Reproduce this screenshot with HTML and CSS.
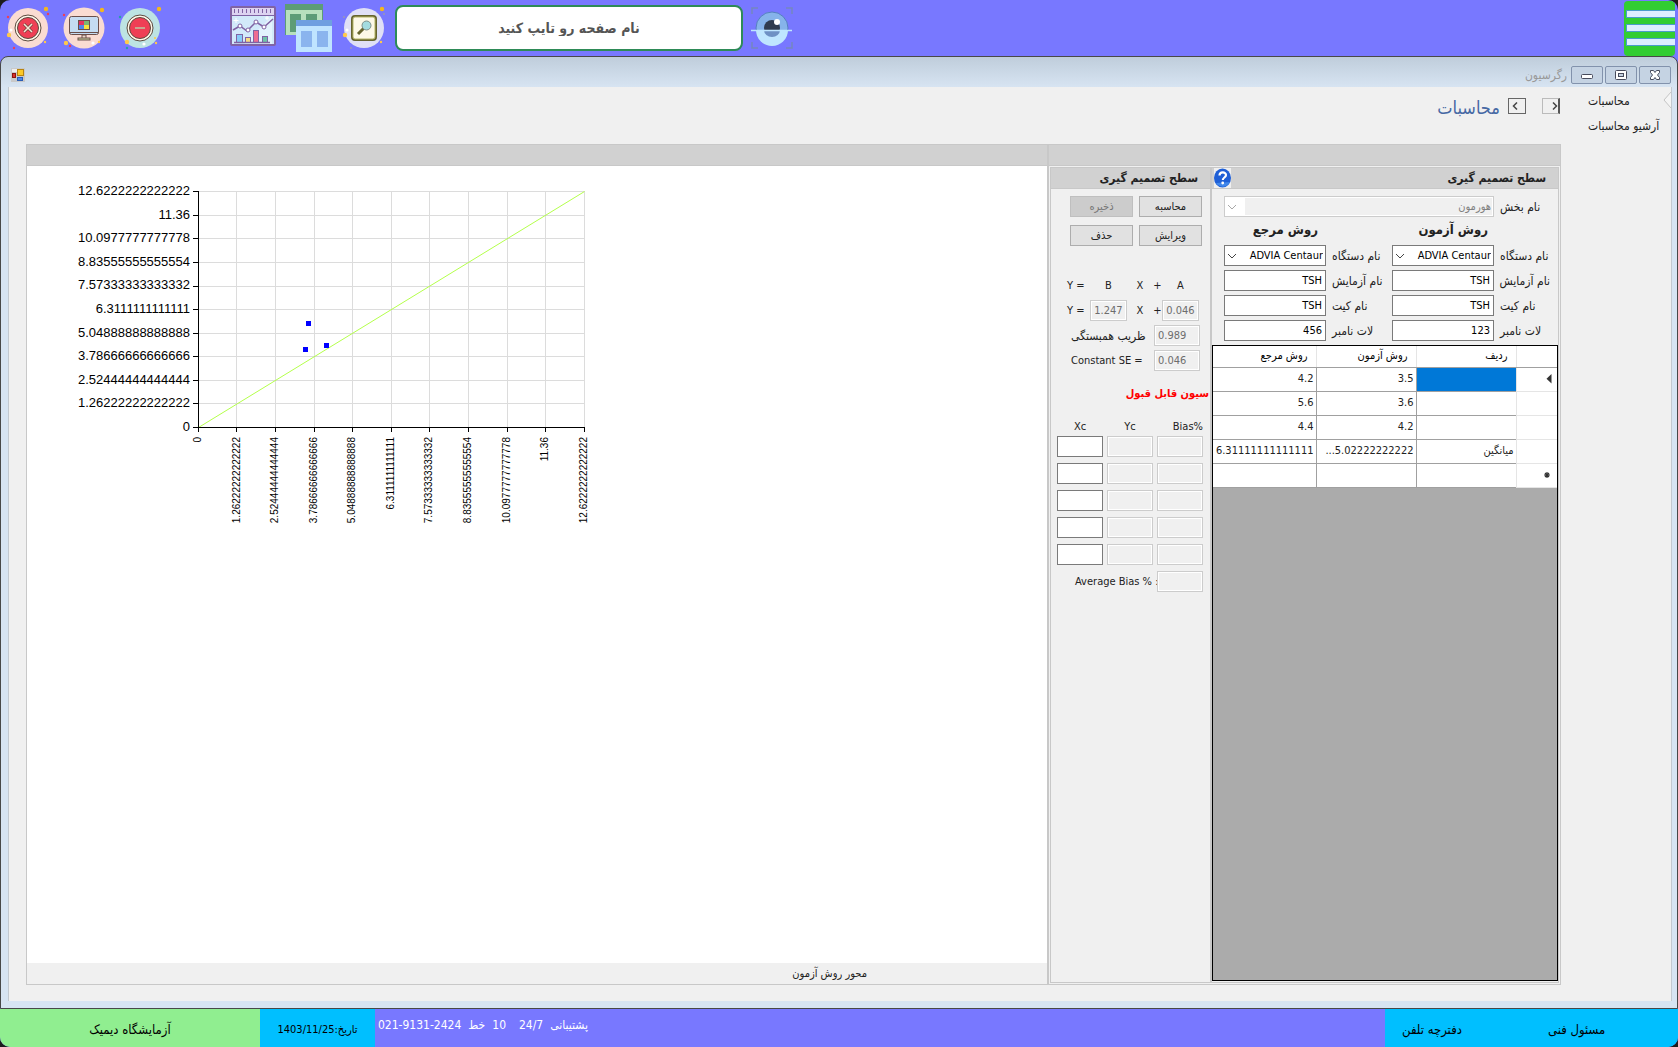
FILE: index.html
```html
<!DOCTYPE html>
<html lang="fa">
<head>
<meta charset="utf-8">
<title>رگرسیون</title>
<link rel="stylesheet" href="styles.css">
</head>
<body>
<div class="app">
  <header class="topbar">
    <nav class="tools">
      <button class="tool" type="button" aria-label="خروج">
        <svg width="44" height="44" viewBox="0 0 44 44">
          <circle cx="22" cy="22" r="20" fill="#fadcd2"/>
          <circle cx="22" cy="22" r="13" fill="#fff8ea" stroke="#5c4a3e"/>
          <circle cx="22" cy="22" r="10.5" fill="#ef3f55" stroke="#5c4a3e"/>
          <path d="M18 18l8 8M26 18l-8 8" stroke="#6b4038" stroke-width="3"/>
          <path d="M18 18l8 8M26 18l-8 8" stroke="#f6e5d5" stroke-width="1.6"/>
          <circle cx="40" cy="3" r="2.2" fill="#f3b71e"/><circle cx="3" cy="29" r="2.2" fill="#ffc94a"/>
          <circle cx="39" cy="36" r="1.2" fill="#ffc94a"/><circle cx="8" cy="42" r="1.2" fill="#ef3f55"/>
          <circle cx="42" cy="8" r="1.2" fill="#ef3f55"/><circle cx="2" cy="11" r="1.2" fill="#ef3f55"/>
          <circle cx="5" cy="24" r="1.5" fill="#fff"/>
        </svg>
      </button>
      <button class="tool" type="button" aria-label="دسکتاپ">
        <svg width="44" height="44" viewBox="0 0 44 44">
          <circle cx="22" cy="22" r="20.5" fill="#fadcd2"/>
          <rect x="7.500" y="10.500" width="29" height="18" rx="2" fill="#c5dcf2" stroke="#6b4f4a"/>
          <path d="M7.500 26.500h29" stroke="#6b4f4a"/>
          <path d="M20 29h4v4h-4z" fill="#ead9c8" stroke="#6b4f4a"/><rect x="16" y="32" width="12" height="2" fill="#c8d6a0" stroke="#6b4f4a"/>
          <rect x="17" y="15" width="5" height="4" fill="#e8325f"/><rect x="22" y="15" width="5" height="4" fill="#7cb573"/>
          <rect x="17" y="19" width="5" height="4" fill="#5286e8"/><rect x="22" y="19" width="5" height="4" fill="#f6e23c"/>
          <rect x="16.500" y="14.500" width="11" height="9" fill="none" stroke="#6b4f4a"/>
          <circle cx="40" cy="4" r="2.200" fill="#f3b71e"/><circle cx="4" cy="37" r="2.200" fill="#ffc94a"/>
          <circle cx="37" cy="36" r="1.200" fill="#ffc94a"/><circle cx="8" cy="40" r="1.200" fill="#ef3f55"/>
          <circle cx="2" cy="9" r="1.200" fill="#ef3f55"/><circle cx="31" cy="37" r="1.600" fill="#fff"/>
        </svg>
      </button>
      <button class="tool" type="button" aria-label="کوچک کردن">
        <svg width="44" height="44" viewBox="0 0 44 44">
          <circle cx="22" cy="22" r="20" fill="#bde3e3"/>
          <circle cx="22" cy="22" r="13" fill="#fff8ea" stroke="#5c4a3e"/>
          <circle cx="22" cy="22" r="10.500" fill="#ef3f55" stroke="#5c4a3e"/>
          <path d="M17 22h10" stroke="#c9a58e" stroke-width="2"/>
          <circle cx="41" cy="3" r="2.200" fill="#f3b71e"/><circle cx="9" cy="36" r="2.200" fill="#ffc94a"/>
          <circle cx="38" cy="37" r="1.200" fill="#ffc94a"/><circle cx="37" cy="32" r="1" fill="#ffc94a"/>
          <circle cx="2" cy="11" r="1.200" fill="#25a0a8"/><circle cx="9" cy="42" r="1.200" fill="#25a0a8"/>
          <circle cx="26" cy="38" r="1.600" fill="#fff"/>
        </svg>
      </button>
    </nav>
    <nav class="pages">
      <button class="tool" type="button" aria-label="نمودار">
        <svg width="46" height="44" viewBox="0 0 46 44">
          <rect x="1" y="1" width="44" height="38" rx="1" fill="#d2e9fa" stroke="#8063a4" stroke-width="2"/>
          <path d="M14 38L42 10v28z" fill="#e3f3fd"/>
          <rect x="2" y="2" width="42" height="7" fill="#ddd3f1"/><path d="M1 9.500h44" stroke="#8063a4"/>
          <path d="M4 5h38" stroke="#8063a4" stroke-width="4" stroke-dasharray="1 3"/>
          <rect x="6.500" y="28.500" width="6" height="8" fill="#86ccf7" stroke="#8063a4"/>
          <rect x="15.500" y="31.500" width="5" height="5" fill="#f7db83" stroke="#8063a4"/>
          <rect x="23.500" y="24.500" width="5" height="12" fill="#ef6c91" stroke="#8063a4"/>
          <rect x="32.500" y="30.500" width="5" height="6" fill="#6fc5a8" stroke="#8063a4"/>
          <path d="M4 36.500h36M3 24l7-4 7 5 9-9 8 5 9-8" fill="none" stroke="#8063a4" stroke-width="1.500"/>
          <g fill="#fff" stroke="#8063a4"><circle cx="10" cy="20" r="2"/><circle cx="18" cy="24" r="2"/><circle cx="26" cy="16" r="2"/><circle cx="34" cy="21" r="2"/></g>
          <path d="M6 12v5M3.500 14.500h5M37 10v4M35 12h4" stroke="#fff"/>
        </svg>
      </button>
      <button class="tool" type="button" aria-label="پنجره‌ها">
        <svg width="48" height="48" viewBox="0 0 48 48">
          <rect x="0" y="0" width="38" height="31" fill="#5d9c77"/><rect x="1" y="6" width="36" height="25" fill="#b7e0bd"/>
          <rect x="5" y="10" width="11" height="18" fill="#5d9c77"/><rect x="21" y="10" width="11" height="18" fill="#5d9c77"/>
          <rect x="11" y="16" width="36" height="32" fill="#bfe4ff"/><rect x="11" y="16" width="36" height="6" fill="#6f9fe0"/>
          <rect x="16" y="27" width="11" height="16" fill="#8ab4ee"/><rect x="32" y="27" width="11" height="16" fill="#8ab4ee"/>
        </svg>
      </button>
      <button class="tool" type="button" aria-label="جستجو">
        <svg width="44" height="44" viewBox="0 0 44 44">
          <circle cx="22" cy="22" r="20" fill="#e0e0f6"/>
          <rect x="10" y="10" width="24" height="24" rx="3" fill="#fdf9e8" stroke="#66642f" stroke-width="2"/>
          <rect x="11" y="11" width="22" height="22" rx="2" fill="none" stroke="#b5b566"/>
          <path d="M16 28l6-6" stroke="#66642f" stroke-width="3"/><circle cx="24.500" cy="19.500" r="4.500" fill="#a4dce0" stroke="#7f8f8a"/>
          <circle cx="40" cy="3" r="2.200" fill="#f3b71e"/><circle cx="3" cy="29" r="2.200" fill="#ffc94a"/>
          <circle cx="39" cy="36" r="1.200" fill="#ffc94a"/><circle cx="42" cy="8" r="1" fill="#9a97b5"/>
          <circle cx="2" cy="11" r="1" fill="#9a97b5"/><circle cx="9" cy="42" r="1" fill="#9a97b5"/><circle cx="5" cy="24" r="1.500" fill="#fff"/>
        </svg>
      </button>
    </nav>
    <input class="page-search" type="text" dir="rtl" placeholder="نام صفحه رو تایپ کنید" aria-label="نام صفحه">
    <button class="tool" type="button" aria-label="نمایش">
      <svg width="42" height="42" viewBox="0 0 42 42">
        <path d="M1 7V1h6M35 1h6v6M1 35v6h6M35 41h6v-6" fill="none" stroke="#7486c0" stroke-width="1.500"/>
        <circle cx="21" cy="21" r="16" fill="#86b3ea" stroke="#5580c0"/>
        <circle cx="21" cy="21" r="8" fill="#303c50"/>
        <path d="M5 23a16 16 0 0 0 32 0z" fill="#bfe6ff"/><path d="M13 23a8 7 0 0 0 16 0z" fill="#6e91c4"/>
        <path d="M0 23.500h41" stroke="#bfe6ff" stroke-width="1.500"/><circle cx="26" cy="15" r="3" fill="#fff"/>
      </svg>
    </button>
    <button class="menu" type="button" aria-label="منو"><span></span><span></span><span></span></button>
  </header>

  <section class="window">
    <div class="titlebar">
      <svg width="14" height="14" viewBox="0 0 14 14">
        <rect width="14" height="14" fill="#c9c9c9"/><rect x="1" y="1" width="5" height="3" fill="#eee"/>
        <rect x="6.500" y="1.500" width="6" height="6" fill="#fbc928" stroke="#b78412"/>
        <rect x="1.500" y="5.500" width="3" height="4" fill="#d8322c" stroke="#8c1410"/>
        <rect x="6.500" y="9.500" width="5" height="3" fill="#4f8be8" stroke="#2a5db5"/>
      </svg>
      <h1 class="window-name" dir="rtl">رگرسیون</h1>
      <div class="window-buttons">
        <button type="button" aria-label="کوچک"><svg width="12" height="12" viewBox="0 0 12 12"><rect x=".5" y="5.500" width="11" height="4" rx="1" fill="#fff" stroke="#474b5c"/></svg></button>
        <button type="button" aria-label="بزرگ"><svg width="12" height="12" viewBox="0 0 12 12"><rect x=".5" y="1.500" width="11" height="9" rx="1" fill="#fff" stroke="#474b5c"/><rect x="3.500" y="4.500" width="5" height="3" fill="#c5d2e2" stroke="#474b5c"/></svg></button>
        <button type="button" aria-label="بستن"><svg width="12" height="12" viewBox="0 0 12 12"><path d="M1.500 1.500h3L6 3.500l1.500-2h3v2L8.500 6l2 2.500v2h-3L6 8.500l-1.500 2h-3v-2l2-2.500-2-2.500z" fill="#fff" stroke="#474b5c"/></svg></button>
      </div>
    </div>

    <div class="client">
      <main class="content">
        <div class="page-head">
          <h2 dir="rtl">محاسبات</h2>
          <button class="step" type="button" aria-label="قبلی"><svg width="10" height="8" viewBox="0 0 10 8"><path d="M5 .5L1.500 4 5 7.500" fill="none" stroke="#444" stroke-width="1.500"/></svg></button>
          <button class="step step-off" type="button" aria-label="بعدی"><svg width="6" height="8" viewBox="0 0 6 8"><path d="M1 .5L4.500 4 1 7.500" fill="none" stroke="#444" stroke-width="1.500"/></svg></button>
        </div>

        <div class="board">
          <section class="plot">
            <div class="strip"></div>
            <div class="canvas">
              <svg class="chart" width="600" height="400" viewBox="27 166 600 400">
                <path class="grid" d="M198 191.500h386M198 215.500h386M198 238.500h386M198 262.500h386M198 286.500h386M198 309.500h386M198 333.500h386M198 356.500h386M198 380.500h386M198 403.500h386M236.500 191v236M275.500 191v236M314.500 191v236M352.500 191v236M391.500 191v236M429.500 191v236M468.500 191v236M507.500 191v236M545.500 191v236M584.500 191v236"/>
                <path class="trend" d="M198.500 427.500L584.500 191.500"/>
                <path class="axis" d="M198.500 191v241M193 427.500h392M193 191.500h5M193 215.500h5M193 238.500h5M193 262.500h5M193 286.500h5M193 309.500h5M193 333.500h5M193 356.500h5M193 380.500h5M193 403.500h5M236.500 427v5M275.500 427v5M314.500 427v5M352.500 427v5M391.500 427v5M429.500 427v5M468.500 427v5M507.500 427v5M545.500 427v5M584.500 427v5"/>
                <g class="points"><rect x="306" y="321" width="5" height="5"/><rect x="303" y="347" width="5" height="5"/><rect x="324" y="343" width="5" height="5"/></g>
                <g class="y-labels">
                  <text x="190" y="195">12.6222222222222</text><text x="190" y="219">11.36</text>
                  <text x="190" y="242">10.0977777777778</text><text x="190" y="266">8.83555555555554</text>
                  <text x="190" y="289">7.57333333333332</text><text x="190" y="313">6.3111111111111</text>
                  <text x="190" y="337">5.04888888888888</text><text x="190" y="360">3.78666666666666</text>
                  <text x="190" y="384">2.52444444444444</text><text x="190" y="407">1.26222222222222</text>
                  <text x="190" y="431">0</text>
                </g>
                <g class="x-labels">
                  <text transform="translate(201 437) rotate(-90)">0</text>
                  <text transform="translate(240 437) rotate(-90)">1.26222222222222</text>
                  <text transform="translate(278 437) rotate(-90)">2.52444444444444</text>
                  <text transform="translate(317 437) rotate(-90)">3.78666666666666</text>
                  <text transform="translate(355 437) rotate(-90)">5.04888888888888</text>
                  <text transform="translate(394 437) rotate(-90)">6.3111111111111</text>
                  <text transform="translate(432 437) rotate(-90)">7.57333333333332</text>
                  <text transform="translate(471 437) rotate(-90)">8.83555555555554</text>
                  <text transform="translate(510 437) rotate(-90)">10.0977777777778</text>
                  <text transform="translate(548 437) rotate(-90)">11.36</text>
                  <text transform="translate(587 437) rotate(-90)">12.6222222222222</text>
                </g>
              </svg>
            </div>
            <p class="axis-name" dir="rtl">محور روش آزمون</p>
          </section>

          <section class="side">
            <div class="strip"></div>
            <div class="groups">
              <form class="group calc">
                <h3 dir="rtl">سطح تصمیم گیری</h3>
                <div class="actions">
                  <button type="button" disabled>ذخیره</button><button type="button">محاسبه</button>
                  <button type="button">حذف</button><button type="button">ویرایش</button>
                </div>
                <div class="formula names"><span>Y =</span><span>B</span><span>X</span><span>+</span><span>A</span></div>
                <div class="formula"><label for="slope">Y =</label><input id="slope" value="1.247" disabled><span>X</span><label for="icept">+</label><input id="icept" value="0.046" disabled></div>
                <div class="stat"><label class="fa" for="corr" dir="rtl">ظریب همبستگی</label><input id="corr" value="0.989" disabled></div>
                <div class="stat"><label for="se">Constant SE =</label><input id="se" value="0.046" disabled></div>
                <p class="verdict" dir="rtl">سیون قابل قبول</p>
                <div class="bias bias-head"><span>Xc</span><span>Yc</span><span class="end">Bias%</span></div>
                <div class="bias">
                  <input aria-label="Xc 1"><input aria-label="Yc 1" disabled><input aria-label="Bias 1" disabled>
                  <input aria-label="Xc 2"><input aria-label="Yc 2" disabled><input aria-label="Bias 2" disabled>
                  <input aria-label="Xc 3"><input aria-label="Yc 3" disabled><input aria-label="Bias 3" disabled>
                  <input aria-label="Xc 4"><input aria-label="Yc 4" disabled><input aria-label="Bias 4" disabled>
                  <input aria-label="Xc 5"><input aria-label="Yc 5" disabled><input aria-label="Bias 5" disabled>
                  <label class="average" for="avg">Average Bias % :</label><input id="avg" disabled>
                </div>
              </form>

              <form class="group setup" dir="rtl">
                <h3>سطح تصمیم گیری
                  <button class="help" type="button" aria-label="راهنما"><svg width="17" height="20" viewBox="0 0 17 20"><rect width="17" height="20" fill="#f0f0f0"/><ellipse cx="8.500" cy="10" rx="8.500" ry="9.500" fill="#1f5fd6"/><path d="M2 15a8.500 9.500 0 0 0 14-1z" fill="#3f86ea"/><path d="M5.500 7.500c0-4 6.500-4 6.500-.5 0 2.500-3.200 2.500-3.200 5" fill="none" stroke="#fff" stroke-width="2.200"/><circle cx="8.700" cy="15" r="1.400" fill="#fff"/></svg></button>
                </h3>
                <div class="fields">
                  <label for="section">نام بخش</label>
                  <span class="pick wide"><select id="section" disabled><option>هورمون</option></select><svg width="10" height="6" viewBox="0 0 10 6"><path d="M1 1l4 4 4-4" fill="none" stroke="#a8a8a8"/></svg></span>
                  <h4>روش آزمون</h4><h4>روش مرجع</h4>
                  <label for="dev1">نام دستگاه</label>
                  <span class="pick"><select id="dev1"><option>ADVIA Centaur</option></select><svg width="10" height="6" viewBox="0 0 10 6"><path d="M1 1l4 4 4-4" fill="none" stroke="#444"/></svg></span>
                  <label for="dev2">نام دستگاه</label>
                  <span class="pick"><select id="dev2"><option>ADVIA Centaur</option></select><svg width="10" height="6" viewBox="0 0 10 6"><path d="M1 1l4 4 4-4" fill="none" stroke="#444"/></svg></span>
                  <label for="test1">نام آزمایش</label><input id="test1" value="TSH"><label for="test2">نام آزمایش</label><input id="test2" value="TSH">
                  <label for="kit1">نام کیت</label><input id="kit1" value="TSH"><label for="kit2">نام کیت</label><input id="kit2" value="TSH">
                  <label for="lot1">لات نامبر</label><input id="lot1" value="123"><label for="lot2">لات نامبر</label><input id="lot2" value="456">
                </div>
                <div class="sheet">
                  <table>
                    <colgroup><col class="c-mark"><col class="c-mid"><col class="c-mid"><col></colgroup>
                    <thead><tr><th></th><th>ردیف</th><th>روش آزمون</th><th>روش مرجع</th></tr></thead>
                    <tbody>
                      <tr><td class="mark"><svg width="6" height="10" viewBox="0 0 6 10"><path d="M5.500 0v9.500L.5 4.800z" fill="#333"/></svg></td><td class="selected"></td><td>3.5</td><td>4.2</td></tr>
                      <tr><td class="mark"></td><td></td><td>3.6</td><td>5.6</td></tr>
                      <tr><td class="mark"></td><td></td><td>4.2</td><td>4.4</td></tr>
                      <tr><td class="mark"></td><td>میانگین</td><td><bdo dir="ltr">...5.02222222222</bdo></td><td>6.31111111111111</td></tr>
                      <tr><td class="mark new"><svg width="6" height="6" viewBox="0 0 6 6"><path d="M3 0v6M0 3h6M1 1l4 4M5 1L1 5" stroke="#333" stroke-width="1.200"/></svg></td><td></td><td></td><td></td></tr>
                    </tbody>
                  </table>
                </div>
              </form>
            </div>
          </section>
        </div>
      </main>

      <aside class="menu-list">
        <a href="#calc" dir="rtl">محاسبات</a>
        <a href="#archive" dir="rtl">آرشیو محاسبات</a>
        <svg class="pointer" width="8" height="16" viewBox="0 0 8 16"><path d="M8 0L1 8l7 8" fill="#f5f5f5" stroke="#c4c4c4"/></svg>
      </aside>
    </div>
  </section>

  <footer class="status">
    <span class="lab" dir="rtl">آزمایشگاه دیمیک</span>
    <span class="date" dir="rtl">تاریخ:1403/11/25</span>
    <span class="support"><span>021-9131-2424</span><span>خط</span><span>10</span><span class="hours">24/7</span><span>پشتیبانی</span></span>
    <span class="links"><a href="#phones" dir="rtl">دفترچه تلفن</a><a href="#tech" dir="rtl">مسئول فنی</a></span>
  </footer>
</div>
</body>
</html>
```
FILE: styles.css
```css
* { box-sizing: border-box; }
body {
  margin: 0;
  background: #1c1c1c;
  color: #222;
  font: 11px/14px "DejaVu Sans Condensed", "DejaVu Sans", sans-serif;
}
h1, h2, h3, h4, p { margin: 0; font-size: inherit; font-weight: normal; }
button, input, select { font: inherit; color: inherit; margin: 0; }
button { padding: 0; }
svg { display: block; }
a { color: inherit; text-decoration: none; }

.app {
  min-height: 100vh;
  display: grid;
  grid-template-rows: 56px 1fr 38px;
  border-radius: 10px;
  overflow: hidden;
  background: #7878ff;
}

/* top bar */
.topbar { display: flex; align-items: center; padding: 0 3px 0 6px; }
.tool { border: 0; background: none; }
.tools { display: flex; align-items: center; gap: 12px; }
.pages { display: flex; align-items: center; gap: 9px; margin: 0 9px 0 68px; }
.page-search {
  width: 348px;
  height: 46px;
  margin-right: 8px;
  border: 2px solid #2e8b57;
  border-radius: 8px;
  background: #fff;
  text-align: center;
  font-size: 14px;
  font-weight: bold;
}
.page-search::placeholder { color: #555; opacity: 1; }
.menu {
  width: 51px;
  height: 55px;
  margin-left: auto;
  padding-left: 2px;
  display: flex;
  flex-direction: column;
  justify-content: center;
  gap: 6px;
  border: 0;
  border-radius: 4px;
  background: #32cd32;
}
.menu span { height: 8px; border: 1px solid #4a9cc9; border-right: 0; background: #ddeeff; }

/* child window */
.window {
  display: flex;
  flex-direction: column;
  padding: 0 5px 7px 7px;
  border: 1px solid #484848;
  border-radius: 8px 8px 0 0;
  background: linear-gradient(#bfcddb, #d7e4f2 30px);
}
.titlebar { height: 30px; display: flex; align-items: center; padding: 6px 1px 0 3px; flex: none; }
.window-name { margin-left: auto; margin-right: 4px; color: #999; font-size: 12px; }
.window-buttons { display: flex; gap: 2px; }
.window-buttons button {
  width: 32px;
  height: 18px;
  display: grid;
  place-items: center;
  border: 1px solid #8292ac;
  border-radius: 2px;
  background: #c5d3e3;
}
.client {
  flex: 1;
  display: flex;
  border: solid #c3c9d0;
  border-width: 0 1px;
  background: #f0f0f0;
}
.content { flex: 1; display: flex; flex-direction: column; padding: 0 0 16px 17px; }
.page-head { height: 57px; display: flex; align-items: flex-start; justify-content: flex-end; gap: 8px; padding: 11px 1px 0 0; }
.page-head h2 { color: #4668a4; font-size: 18px; line-height: 20px; }
.step { width: 18px; height: 16px; display: grid; place-items: center; border: 1px solid #666; background: #f0f0f0; }
.step-off { margin-left: 8px; border-color: #bbb #555 #bbb #bbb; border-right-width: 2px; justify-items: end; }
.menu-list { position: relative; width: 110px; display: flex; flex-direction: column; align-items: flex-start; gap: 11px; padding: 7px 0 0 27px; font-size: 12px; }
.pointer { position: absolute; right: 0; top: 5px; }

/* board */
.board { flex: 1; display: flex; border: 1px solid #c8c8c8; }
.strip { height: 21px; flex: none; border-bottom: 1px solid #c8c8c8; background: #d1d1d1; }
.plot { flex: 1; display: flex; flex-direction: column; border-right: 2px solid #c8c8c8; }
.canvas { flex: 1; background: #fff; }
.axis-name { height: 21px; padding: 4px 180px 0 0; }
.chart { font-family: "Liberation Sans", Arial, sans-serif; }
.grid { stroke: #dcdcdc; fill: none; }
.axis { stroke: #000; fill: none; }
.trend { stroke: #b4ff4b; fill: none; }
.points { fill: #00f; }
.y-labels, .x-labels { text-anchor: end; fill: #000; }
.y-labels { font-size: 13px; }
.x-labels { font-size: 10px; }

.side { width: 511px; display: flex; flex-direction: column; }
.groups { flex: 1; display: flex; padding: 1px; }
.group { display: flex; flex-direction: column; border: 1px solid #c8c8c8; }
.group h3 {
  height: 21px;
  flex: none;
  display: flex;
  align-items: center;
  border-bottom: 1px solid #c8c8c8;
  background: #d1d1d1;
  font-size: 12px;
  font-weight: bold;
}
.group input {
  width: 100%;
  min-width: 0;
  height: 21px;
  padding: 0 3px;
  border: 1px solid #7a7a7a;
  border-radius: 0;
  background: #fff;
  color: #000;
}
.group input:disabled { border-color: #ccc; background: #f0f0f0; box-shadow: inset 0 0 0 1px #fff; color: #6d6d6d; }

/* calculation group */
.calc { width: 161px; }
.calc h3 { padding-right: 12px; }
.actions { display: grid; grid-template-columns: 63px 63px; gap: 8px 6px; padding: 7px 0 0 19px; }
.actions button { height: 21px; border: 1px solid #adadad; background: #e1e1e1; }
.actions button:disabled { border-color: #bfbfbf; background: #ccc; color: #777; }
.formula { display: grid; grid-template-columns: 23px 37px 26px 9px 37px; align-items: center; padding-left: 16px; height: 25px; }
.formula > * { text-align: center; }
.formula > :first-child { text-align: left; }
.names { margin-top: 27px; }
.stat { display: flex; align-items: center; justify-content: flex-end; height: 25px; padding-right: 10px; }
.stat label { white-space: nowrap; flex: 1; padding-left: 20px; text-align: left; }
.stat .fa { font-size: 12px; }
.group .stat input { width: 46px; }
.verdict { height: 28px; padding: 14px 1px 0 0; color: #f00; font-weight: bold; }
.bias { display: grid; grid-template-columns: 46px 46px 46px; gap: 6px 4px; padding: 2px 0 0 6px; }
.bias-head { padding-top: 19px; }
.bias span { text-align: center; }
.bias .end { text-align: right; }
.bias .average { grid-column: span 2; align-self: center; padding-left: 18px; white-space: nowrap; }

/* set-up group */
.setup { flex: 1; }
.setup h3 { padding-right: 12px; justify-content: space-between; }
.help { border: 0; background: none; margin-left: 2px; }
.fields { display: grid; grid-template-columns: 56px 102px 66px 102px; row-gap: 4px; padding: 7px 8px 4px 0; align-items: center; }
.fields label { padding-left: 6px; text-align: left; white-space: nowrap; font-size: 12px; }
.fields h4 { grid-column: span 2; height: 20px; padding: 0 62px 0 0; font-size: 13px; line-height: 18px; font-weight: bold; white-space: nowrap; }
.fields h4 + h4 { padding-right: 74px; }
.pick { position: relative; height: 21px; }
.pick.wide { grid-column: span 3; }
.pick select { width: 100%; height: 21px; padding: 0 2px; appearance: none; border: 1px solid #7a7a7a; border-radius: 0; background: #fff; color: #000; }
.pick select:disabled { border-color: #ccc; background: linear-gradient(90deg, #fff 20px, #f0f0f0 20px); box-shadow: inset 0 0 0 1px #fff; color: #808080; opacity: 1; }
.pick svg { position: absolute; left: 3px; top: 8px; pointer-events: none; }

.sheet { flex: 1; border: 1px solid #000; background: #ababab; margin: 0 0 1px; }
table { width: 100%; border-collapse: collapse; table-layout: fixed; background: #fff; }
.c-mark { width: 41px; }
.c-mid { width: 100px; }
th { height: 21px; padding: 0 8px; border-left: 1px solid #e5e5e5; border-bottom: 1px solid #a0a0a0; font-weight: normal; text-align: right; color: #000; }
td { height: 24px; padding: 0 2px; border: 1px solid #a0a0a0; white-space: nowrap; }
th:last-child { border-left: 0; }
td:last-child { border-left: 0; }
.mark { border-color: #e5e5e5; border-right: 0; border-left-color: #e5e5e5; padding: 0 5px; }
.mark.new { padding: 0 7px; }
.selected { background: #0078d7; }

/* status bar */
.status { display: flex; color: #000; }
.lab, .date { display: grid; place-items: center; padding-top: 4px; }
.lab { width: 260px; background: #90ee90; font-size: 13px; }
.date { width: 115px; background: #00bfff; }
.support { flex: 1; display: flex; gap: 7px; padding: 9px 0 0 3px; color: #fff; font-size: 12px; }
.hours { margin-left: 6px; }
.links { width: 293px; display: flex; align-items: center; gap: 86px; padding: 4px 0 0 17px; background: #00bfff; font-size: 13px; }
```
